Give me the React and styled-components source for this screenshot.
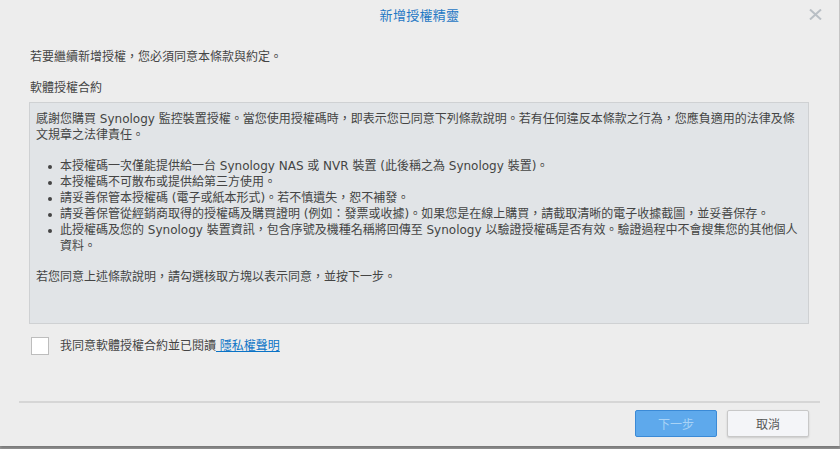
import styled, { createGlobalStyle } from "styled-components";

const GlobalStyle = createGlobalStyle`
  html, body {
    margin: 0;
    padding: 0;
    background: #9c9c9c;
    height: 449px;
    overflow: hidden;
  }
  body {
    font-family: "DejaVu Sans", "Noto Sans CJK TC", sans-serif;
    font-size: 12px;
    color: #444;
  }
`;

const Dialog = styled.div`
  width: 839px;
  height: 446px;
  background: #ededed;
  border-right: 1px solid #c4c4c4;
  box-shadow: 0 2px 3px rgba(0, 0, 0, 0.25);
  display: flex;
  flex-direction: column;
`;

const Header = styled.div`
  height: 31px;
  display: flex;
  align-items: center;
  justify-content: center;
  position: relative;
`;

const Title = styled.div`
  font-size: 13px;
  color: #1f78c4;
  line-height: 16px;
  letter-spacing: 0.3px;
`;

const CloseButton = styled.button`
  position: absolute;
  top: 7px;
  right: 16px;
  width: 16px;
  height: 14px;
  padding: 0;
  border: 0;
  background: transparent;
  display: flex;
  align-items: center;
  justify-content: center;
`;

const Body = styled.div`
  flex: 1;
  padding: 0 30px 0 30px;
  display: flex;
  flex-direction: column;
`;

const Intro = styled.p`
  margin: 18px 0 0;
  line-height: 16px;
`;

const Label = styled.div`
  margin-top: 15px;
  line-height: 16px;
`;

const Agreement = styled.div`
  margin: 6px 0 0 -1px;
  height: 222px;
  box-sizing: border-box;
  background: #e1e4e7;
  border: 1px solid #cfd1d3;
  padding: 8px 8px 0 6px;
  line-height: 16px;
`;

const Para = styled.p`
  margin: 0;
`;

const List = styled.ul`
  margin: 15px 0 15px;
  padding: 0 0 0 24px;
  list-style: none;
`;

const Item = styled.li`
  position: relative;
  &::before {
    content: "";
    position: absolute;
    left: -12px;
    top: 7px;
    width: 4px;
    height: 4px;
    border-radius: 50%;
    background: #444;
  }
`;

const AgreeRow = styled.label`
  margin-top: 13px;
  display: flex;
  align-items: center;
  gap: 11px;
  line-height: 16px;
`;

const Check = styled.span`
  width: 16px;
  height: 16px;
  background: #fff;
  border: 1px solid #bdbdbd;
  margin-left: 1px;
`;

const Link = styled.a`
  color: #0a73c6;
  text-decoration: underline;
`;

const Footer = styled.div`
  margin: 0 19px 0 19px;
  border-top: 2px solid #d6d6d6;
  padding: 7px 11px 9px 0;
  display: flex;
  justify-content: flex-end;
  gap: 10px;
`;

const Button = styled.button`
  width: 82px;
  height: 27px;
  box-sizing: border-box;
  font-family: inherit;
  font-size: 12px;
  border-radius: 2px;
  border: 1px solid ${({ $primary }) => ($primary ? "#3b8ad6" : "#c8c8c8")};
  background: ${({ $primary }) => ($primary ? "#5ea9ec" : "#f4f5f8")};
  color: ${({ $primary }) => ($primary ? "#a9d3f6" : "#555")};
  box-shadow: ${({ $primary }) =>
    $primary ? "none" : "0 1px 2px rgba(0,0,0,0.15)"};
`;

const App = () => {
  return (
    <>
      <GlobalStyle />
      <Dialog>
        <Header>
          <Title>新增授權精靈</Title>
          <CloseButton aria-label="close">
            <svg width="13" height="11" viewBox="0 0 13 11">
              <path
                d="M1 0.5 L12 10.5 M12 0.5 L1 10.5"
                stroke="#b9bfc5"
                strokeWidth="2"
              />
            </svg>
          </CloseButton>
        </Header>
        <Body>
          <Intro>若要繼續新增授權，您必須同意本條款與約定。</Intro>
          <Label>軟體授權合約</Label>
          <Agreement>
            <Para>
              感謝您購買 Synology 監控裝置授權。當您使用授權碼時，即表示您已同意下列條款說明。若有任何違反本條款之行為，您應負適用的法律及條文規章之法律責任。
            </Para>
            <List>
              <Item>
                本授權碼一次僅能提供給一台 Synology NAS 或 NVR 裝置 (此後稱之為 Synology 裝置)。
              </Item>
              <Item>本授權碼不可散布或提供給第三方使用。</Item>
              <Item>請妥善保管本授權碼 (電子或紙本形式)。若不慎遺失，恕不補發。</Item>
              <Item>
                請妥善保管從經銷商取得的授權碼及購買證明 (例如：發票或收據)。如果您是在線上購買，請截取清晰的電子收據截圖，並妥善保存。
              </Item>
              <Item>
                此授權碼及您的 Synology 裝置資訊，包含序號及機種名稱將回傳至 Synology 以驗證授權碼是否有效。驗證過程中不會搜集您的其他個人資料。
              </Item>
            </List>
            <Para>若您同意上述條款說明，請勾選核取方塊以表示同意，並按下一步。</Para>
          </Agreement>
          <AgreeRow>
            <Check />
            <span>
              我同意軟體授權合約並已閱讀<Link href="#"> 隱私權聲明</Link>
            </span>
          </AgreeRow>
        </Body>
        <Footer>
          <Button $primary disabled>
            下一步
          </Button>
          <Button>取消</Button>
        </Footer>
      </Dialog>
    </>
  );
};

export default App;
